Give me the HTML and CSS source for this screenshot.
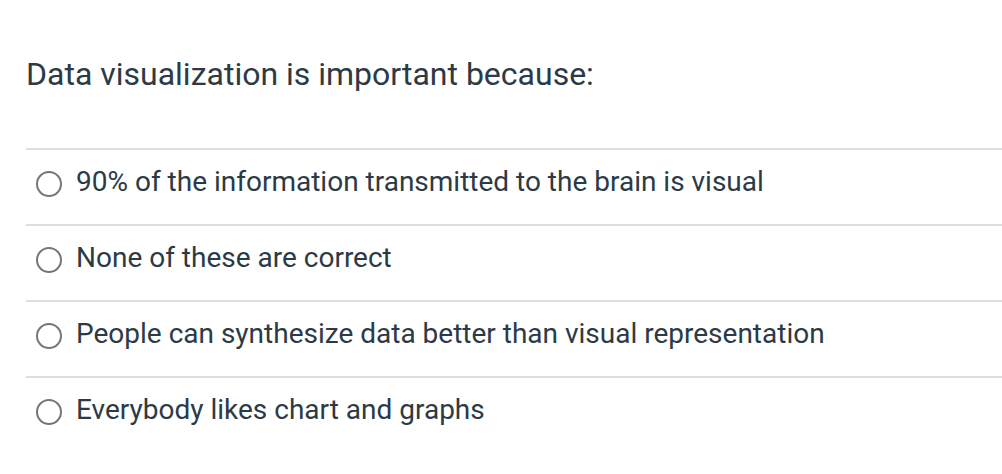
FILE: index.html
```html
<!DOCTYPE html>
<html>
<head>
<meta charset="utf-8">
<link rel="stylesheet" href="styles.css">
</head>
<body>
<main class="quiz">
  <h1 class="question">Data visualization is important because:</h1>
  <ul class="options">
    <li class="option"><span class="radio"></span><span class="label">90% of the information transmitted to the brain is visual</span></li>
    <li class="option"><span class="radio"></span><span class="label">None of these are correct</span></li>
    <li class="option"><span class="radio"></span><span class="label">People can synthesize data better than visual representation</span></li>
    <li class="option"><span class="radio"></span><span class="label">Everybody likes chart and graphs</span></li>
  </ul>
</main>
</body>
</html>
```
FILE: styles.css
```css
html, body {
  margin: 0;
  padding: 0;
  background: #fff;
}
body {
  font-family: Roboto, "Liberation Sans", sans-serif;
  color: #2c3a46;
  width: 1002px;
  height: 474px;
  overflow: hidden;
}
.quiz {
  padding-left: 26px;
}
.question {
  margin: 55px 0 0 0;
  font-size: 32px;
  line-height: 38px;
  font-weight: 400;
  padding-bottom: 55px;
}
.options {
  list-style: none;
  margin: 0;
  padding: 0;
}
.option {
  display: flex;
  align-items: center;
  border-top: 2px solid #dedede;
  padding: 16px 0 26px 10px;
  height: 32px;
}
.radio {
  width: 26px;
  height: 26px;
  box-sizing: border-box;
  border: 2px solid #767676;
  border-radius: 50%;
  flex: none;
  margin-top: 4px;
  margin-right: 14px;
}
.label {
  font-size: 28px;
  line-height: 32px;
}
```
